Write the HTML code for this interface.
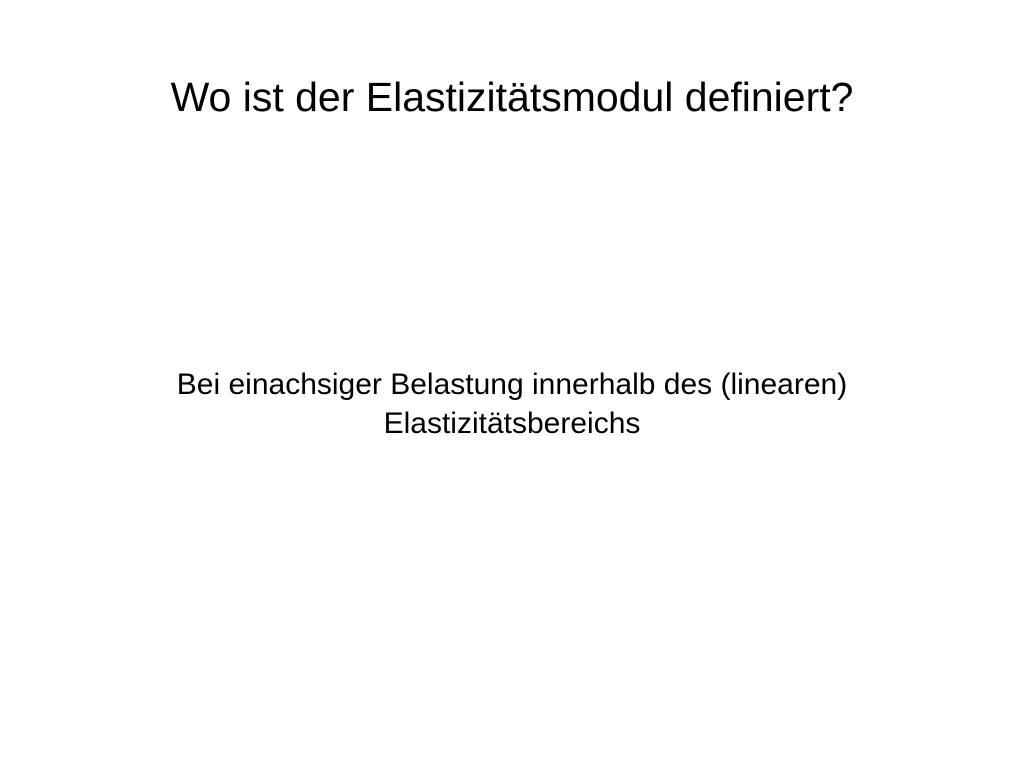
<!DOCTYPE html>
<html><head><meta charset="utf-8"><style>
html,body{margin:0;padding:0;background:#fff;width:1024px;height:768px;overflow:hidden}
body{font-family:"Liberation Sans","DejaVu Sans",sans-serif;color:#000;position:relative}
.t{position:absolute;top:73px;left:0;width:1024px;text-align:center;font-size:41px;line-height:48px;white-space:nowrap}
.b{position:absolute;top:365px;left:0;width:1024px;text-align:center;font-size:30px;line-height:39px;white-space:nowrap}
</style></head><body>
<div class="t">Wo ist der Elastizitätsmodul definiert?</div>
<div class="b">Bei einachsiger Belastung innerhalb des (linearen)<br>Elastizitätsbereichs</div>
</body></html>
